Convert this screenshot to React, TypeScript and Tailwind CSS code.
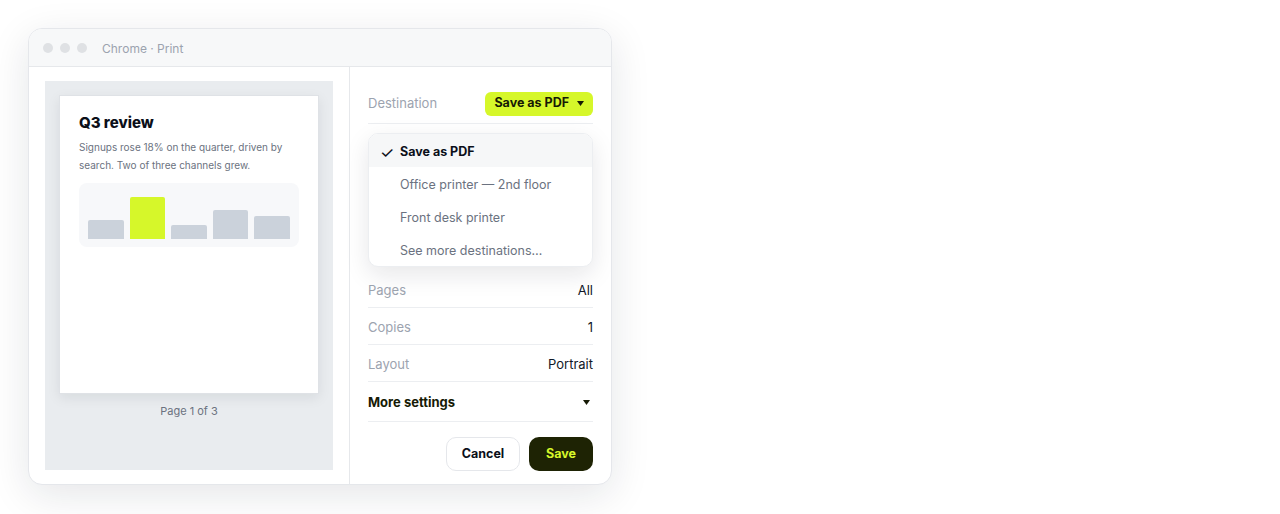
import React from "react"

const font = { fontFamily: "Inter, 'Noto Sans', sans-serif" }

const bars = [
  { h: "h-[19px]", lime: false },
  { h: "h-[42px]", lime: true },
  { h: "h-[14px]", lime: false },
  { h: "h-[29px]", lime: false },
  { h: "h-[23px]", lime: false },
]

const destinations = [
  { name: "Save as PDF", selected: true },
  { name: "Office printer — 2nd floor", selected: false },
  { name: "Front desk printer", selected: false },
  { name: "See more destinations…", selected: false },
]

const settings = [
  { label: "Pages", value: "All" },
  { label: "Copies", value: "1" },
  { label: "Layout", value: "Portrait" },
]

function Caret() {
  return (
    <svg width="7" height="5" viewBox="0 0 7 5" className="shrink-0">
      <path d="M0 0h7L3.5 5z" fill="currentColor" />
    </svg>
  )
}

export default function App() {
  return (
    <div className="min-h-[514px] bg-white p-[28px] antialiased" style={font}>
      <div className="flex h-[457px] w-[584px] flex-col overflow-hidden rounded-[14px] border border-[#e5e7eb] bg-white shadow-[0_10px_40px_rgba(15,23,42,0.11)]">
        {/* Title bar */}
        <div className="flex h-[38px] shrink-0 items-center gap-[7px] border-b border-[#e6e8eb] bg-[#f7f8f9] px-[14px]">
          <span className="h-[10px] w-[10px] rounded-full bg-[#dfe1e4]" />
          <span className="h-[10px] w-[10px] rounded-full bg-[#dfe1e4]" />
          <span className="h-[10px] w-[10px] rounded-full bg-[#dfe1e4]" />
          <span className="ml-[8px] pt-[2px] text-[12px] text-[#9ca3af]">Chrome · Print</span>
        </div>

        <div className="flex flex-1">
          {/* Preview */}
          <div className="w-[321px] shrink-0 border-r border-[#e6e8eb] px-[16px] py-[14px]">
            <div className="flex h-full flex-col items-center bg-[#e9ecef] p-[14px]">
              <div className="h-[299px] w-full border border-[#dfe2e6] bg-white px-[19px] pt-[17px] shadow-[0_4px_12px_rgba(15,23,42,0.08)]">
                <h1 className="text-[15px] font-extrabold leading-[20px] text-[#0b0f19]">Q3 review</h1>
                <p className="mt-[5px] text-[10px] leading-[18px] text-[#6b7280]">
                  Signups rose 18% on the quarter, driven by search. Two of three channels grew.
                </p>
                <div className="mt-[9px] flex h-[64px] items-end gap-[6px] rounded-[8px] bg-[#f7f8fa] px-[9px] pb-[8px]">
                  {bars.map((b, i) => (
                    <div
                      key={i}
                      className={`${b.h} flex-1 rounded-t-[2px] ${b.lime ? "bg-[#d6f72a]" : "bg-[#cbd2db]"}`}
                    />
                  ))}
                </div>
              </div>
              <div className="mt-[9px] text-[11px] text-[#6b7280]">Page 1 of 3</div>
            </div>
          </div>

          {/* Settings */}
          <div className="flex flex-1 flex-col px-[18px] pt-[15px]">
            <div className="flex h-[42px] items-center justify-between border-b border-[#eceef1] pt-[2px]">
              <span className="text-[13px] text-[#9ca3af]">Destination</span>
              <button className="flex h-[24px] items-center gap-[8px] rounded-[6px] bg-[#d6f72a] px-[9px] text-[12.5px] font-bold text-[#161a05]">
                Save as PDF
                <Caret />
              </button>
            </div>

            <div className="mt-[9px] mb-[4px] overflow-hidden rounded-[10px] border border-[#eceef1] bg-white shadow-[0_8px_24px_rgba(15,23,42,0.10)]">
              {destinations.map((d) => (
                <div
                  key={d.name}
                  className={`flex h-[33px] items-center pl-[11px] pt-[3px] text-[12.5px] ${
                    d.selected ? "bg-[#f6f7f8] font-bold text-[#0b0f19]" : "text-[#6b7280]"
                  }`}
                >
                  <span className="w-[20px] text-[16px] font-normal leading-none">{d.selected ? "✓" : ""}</span>
                  {d.name}
                </div>
              ))}
            </div>

            {settings.map((s) => (
              <div key={s.label} className="flex h-[37px] items-center justify-between border-b border-[#eceef1] pt-[3px]">
                <span className="text-[13px] text-[#9ca3af]">{s.label}</span>
                <span className="text-[13px] text-[#111827]">{s.value}</span>
              </div>
            ))}

            <div className="flex h-[40px] items-center justify-between border-b border-[#eceef1] pr-[3px] pt-[2px] text-[#161a05]">
              <span className="text-[13px] font-bold">More settings</span>
              <Caret />
            </div>

            <div className="mt-[15px] flex justify-end gap-[9px]">
              <button className="h-[34px] w-[74px] rounded-[10px] border border-[#e5e7eb] bg-white text-[12.5px] font-bold text-[#0b0f19]">
                Cancel
              </button>
              <button className="h-[34px] w-[64px] rounded-[10px] bg-[#1e2304] text-[12.5px] font-bold text-[#d6f72a]">
                Save
              </button>
            </div>
          </div>
        </div>
      </div>
    </div>
  )
}
